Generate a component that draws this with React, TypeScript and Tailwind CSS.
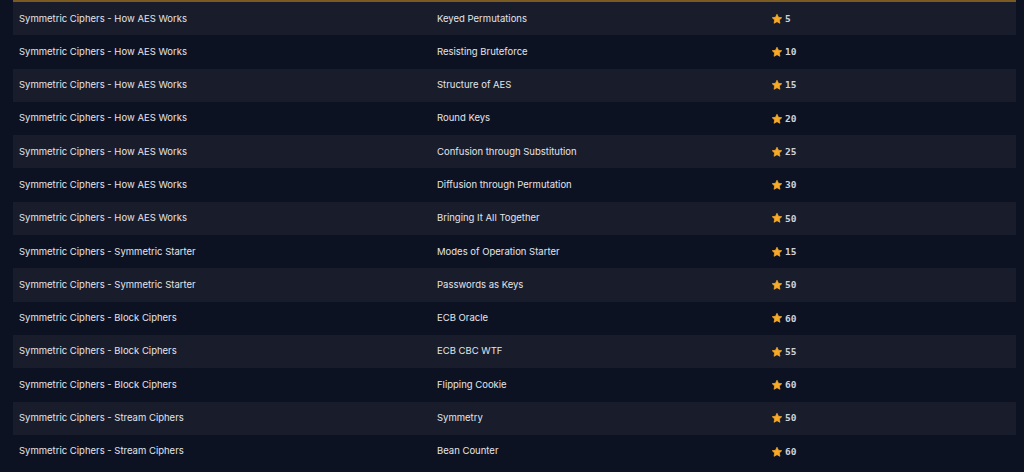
const rows: [string, string, number][] = [
  ["Symmetric Ciphers - How AES Works", "Keyed Permutations", 5],
  ["Symmetric Ciphers - How AES Works", "Resisting Bruteforce", 10],
  ["Symmetric Ciphers - How AES Works", "Structure of AES", 15],
  ["Symmetric Ciphers - How AES Works", "Round Keys", 20],
  ["Symmetric Ciphers - How AES Works", "Confusion through Substitution", 25],
  ["Symmetric Ciphers - How AES Works", "Diffusion through Permutation", 30],
  ["Symmetric Ciphers - How AES Works", "Bringing It All Together", 50],
  ["Symmetric Ciphers - Symmetric Starter", "Modes of Operation Starter", 15],
  ["Symmetric Ciphers - Symmetric Starter", "Passwords as Keys", 50],
  ["Symmetric Ciphers - Block Ciphers", "ECB Oracle", 60],
  ["Symmetric Ciphers - Block Ciphers", "ECB CBC WTF", 55],
  ["Symmetric Ciphers - Block Ciphers", "Flipping Cookie", 60],
  ["Symmetric Ciphers - Stream Ciphers", "Symmetry", 50],
  ["Symmetric Ciphers - Stream Ciphers", "Bean Counter", 60],
];

function Star() {
  return (
    <svg viewBox="0 0 24 24" className="h-[12px] w-[12px] shrink-0" fill="#f7a928">
      <path d="M12 2.5l2.9 6.1 6.6.8-4.9 4.6 1.3 6.6L12 17.3l-5.9 3.3 1.3-6.6-4.9-4.6 6.6-.8z" stroke="#f7a928" strokeWidth="1.5" strokeLinejoin="round" />
    </svg>
  );
}

export default function App() {
  return (
    <div className="h-[472px] w-[1024px] overflow-hidden bg-[#0d1222] px-[13px] font-['Inter',sans-serif] text-[9.5px] text-[#e3e5ea]">
      <div className="w-[1003px] border-t-2 border-[#7c5b22]">
        {rows.map(([cat, name, pts], i) => (
          <div
            key={i}
            className={`grid h-[33.3px] grid-cols-[418px_335px_1fr] items-center ${i % 2 === 0 ? "bg-[#181c2b]" : "bg-[#0d1222]"}`}
          >
            <div className="pl-[6px]">{cat}</div>
            <div className="pl-[6px]">{name}</div>
            <div className="flex items-center gap-[2px] pl-[5px] font-['DejaVu_Sans_Mono',monospace] text-[9.5px] font-bold leading-none text-[#cfd2da]">
              <Star />
              <span>{pts}</span>
            </div>
          </div>
        ))}
      </div>
    </div>
  );
}
